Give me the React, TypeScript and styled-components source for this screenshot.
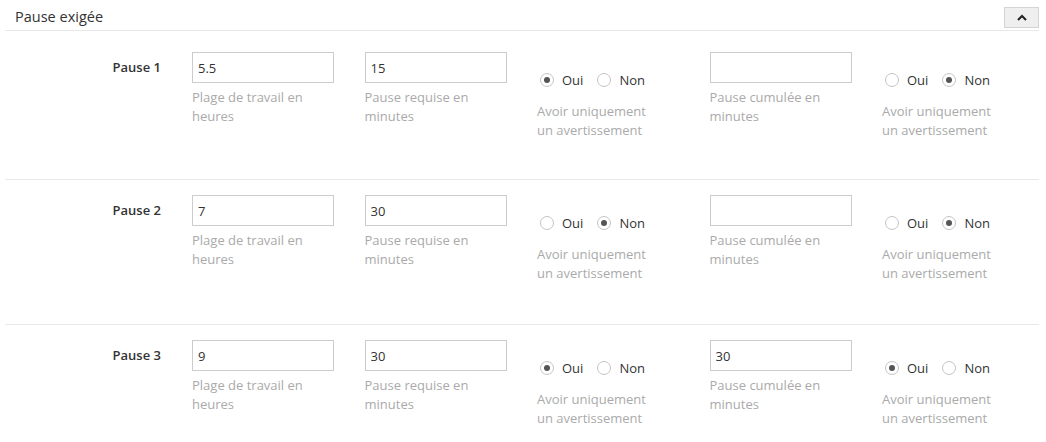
import React from 'react';
import styled, { createGlobalStyle } from 'styled-components';

const GlobalStyle = createGlobalStyle`
  html, body {
    margin: 0;
    padding: 0;
    background: #fff;
  }
  body {
    font-family: "Open Sans", "Liberation Sans", sans-serif;
    font-size: 13px;
    color: #333;
  }
`;

type PauseRow = {
  label: string;
  hours: string;
  minutes: string;
  warnRequired: boolean;
  cumulated: string;
  warnCumulated: boolean;
};

const rows: PauseRow[] = [
  { label: 'Pause 1', hours: '5.5', minutes: '15', warnRequired: true, cumulated: '', warnCumulated: false },
  { label: 'Pause 2', hours: '7', minutes: '30', warnRequired: false, cumulated: '', warnCumulated: false },
  { label: 'Pause 3', hours: '9', minutes: '30', warnRequired: true, cumulated: '30', warnCumulated: true },
];

function RadioPair({ value }: { value: boolean }) {
  return (
    <RadioGroup>
      <RadioOption>
        <RadioCircle $checked={value} />
        Oui
      </RadioOption>
      <RadioOption>
        <RadioCircle $checked={!value} />
        Non
      </RadioOption>
    </RadioGroup>
  );
}

export default function App() {
  return (
    <>
      <GlobalStyle />
      <Panel>
        <Header>
          <Title>Pause exigée</Title>
          <CollapseButton type="button">
            <svg width="10" height="7" viewBox="0 0 10 7">
              <polyline points="1,6 5,2 9,6" fill="none" stroke="#222" strokeWidth="2" />
            </svg>
          </CollapseButton>
        </Header>
        {rows.map((r) => (
          <Row key={r.label}>
            <RowLabel>{r.label}</RowLabel>
            <Field>
              <TextInput defaultValue={r.hours} />
              <Help>Plage de travail en heures</Help>
            </Field>
            <Field>
              <TextInput defaultValue={r.minutes} />
              <Help>Pause requise en minutes</Help>
            </Field>
            <Field>
              <RadioPair value={r.warnRequired} />
              <RadioHelp>Avoir uniquement un avertissement</RadioHelp>
            </Field>
            <Field>
              <TextInput defaultValue={r.cumulated} />
              <Help>Pause cumulée en minutes</Help>
            </Field>
            <Field>
              <RadioPair value={r.warnCumulated} />
              <RadioHelp>Avoir uniquement un avertissement</RadioHelp>
            </Field>
          </Row>
        ))}
      </Panel>
    </>
  );
}

const Panel = styled.div`
  width: 1034px;
  height: 442px;
  overflow: hidden;
  margin-left: 5px;
`;

const Header = styled.div`
  display: flex;
  align-items: center;
  justify-content: space-between;
  height: 30px;
  border-bottom: 1px solid #e8e8e8;
  padding-left: 10px;
`;

const Title = styled.div`
  font-size: 14.5px;
  color: #333;
  margin-top: 2px;
`;

const CollapseButton = styled.button`
  width: 35px;
  height: 21px;
  margin-top: 4px;
  padding: 0;
  display: flex;
  align-items: center;
  justify-content: center;
  background: #efefef;
  border: 1px solid #d4d4d4;
  border-radius: 0;
`;

const Row = styled.div`
  box-sizing: border-box;
  display: grid;
  grid-template-columns: 187px repeat(5, 172.5px);
  align-items: start;
  height: 145px;
  padding-top: 15px;
  border-top: 1px solid #e8e8e8;

  &:nth-child(2) {
    border-top: none;
    height: 148px;
    padding-top: 21px;
  }
`;

const RowLabel = styled.div`
  font-weight: 600;
  text-align: right;
  padding-right: 31px;
  line-height: 30px;
  color: #333;
`;

const Field = styled.div`
  display: flex;
  flex-direction: column;
  width: 142px;
`;

const TextInput = styled.input`
  box-sizing: border-box;
  width: 142px;
  height: 31px;
  margin: 0;
  padding: 0 5px;
  border: 1px solid #ccc;
  border-radius: 0;
  font-family: inherit;
  font-size: 13px;
  color: #333;
  outline: none;
`;

const Help = styled.div`
  margin-top: 5px;
  line-height: 19px;
  color: #aaa;
  padding-right: 20px;
`;

const RadioHelp = styled(Help)`
  margin-top: 12px;
`;

const RadioGroup = styled.div`
  display: flex;
  align-items: center;
  gap: 14px;
  margin-top: 18px;
  padding-left: 3px;
  height: 20px;
`;

const RadioOption = styled.label`
  display: flex;
  align-items: center;
  gap: 8px;
  color: #333;
`;

const RadioCircle = styled.span<{ $checked: boolean }>`
  box-sizing: border-box;
  width: 14px;
  height: 14px;
  border-radius: 50%;
  border: 1px solid #c4c4c4;
  background: #fff;
  display: flex;
  align-items: center;
  justify-content: center;

  &::after {
    content: '';
    width: 6px;
    height: 6px;
    border-radius: 50%;
    background: ${(p) => (p.$checked ? '#555' : 'transparent')};
  }
`;
